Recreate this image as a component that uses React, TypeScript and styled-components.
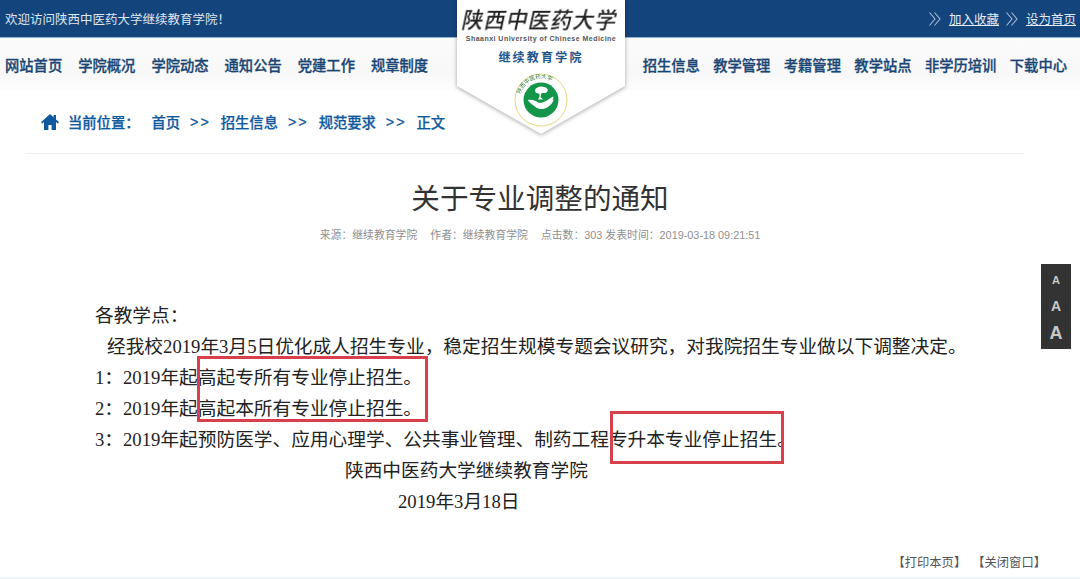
import React from 'react';
import styled, { createGlobalStyle } from 'styled-components';

const CJK = `"Noto Sans CJK SC", "Liberation Sans", sans-serif`;
const SERIF = `"Liberation Serif", "Noto Sans CJK SC", serif`;

const leftNav = ['网站首页', '学院概况', '学院动态', '通知公告', '党建工作', '规章制度'];
const rightNav = ['招生信息', '教学管理', '考籍管理', '教学站点', '非学历培训', '下载中心'];
const crumbs = ['首页', '招生信息', '规范要求', '正文'];

const DoubleChevron: React.FC = () => (
    <svg width="12" height="14" viewBox="0 0 12 14" fill="none" stroke="#a9bdd4" strokeWidth="1.1">
        <path d="M0.500 0.500 6 7 0.500 13.500" />
        <path d="M5.500 0.500 11 7 5.500 13.500" />
    </svg>
);

const App: React.FC = () => {
    return (
        <Page>
            <GlobalStyle />
            <TopBar>
                <Welcome>欢迎访问陕西中医药大学继续教育学院！</Welcome>
                <TopLinks>
                    <DoubleChevron />
                    <TopLink>加入收藏</TopLink>
                    <DoubleChevron />
                    <TopLink>设为首页</TopLink>
                </TopLinks>
            </TopBar>
            <Nav>
                <NavGroup $gap={16}>
                    {leftNav.map((item) => <NavItem key={item}>{item}</NavItem>)}
                </NavGroup>
                <NavGroup $gap={13.4}>
                    {rightNav.map((item) => <NavItem key={item}>{item}</NavItem>)}
                </NavGroup>
            </Nav>
            <PennantShadow>
                <Pennant>
                    <LogoTitle>陕西中医药大学</LogoTitle>
                    <LogoEnglish>Shaanxi University of Chinese Medicine</LogoEnglish>
                    <LogoSchool>继续教育学院</LogoSchool>
                    <svg width="54" height="54" viewBox="0 0 54 54">
                        <circle cx="27" cy="27" r="26" fill="#fff" stroke="#e9d27c" strokeWidth="1" />
                        <circle cx="27" cy="27" r="17.500" fill="#14964a" />
                        <path id="logo-ring" d="M5.500 27a21.500 21.500 0 0 1 43 0" fill="none" />
                        <text fontSize="5.500" fill="#2c7a45" fontFamily={CJK}>
                            <textPath href="#logo-ring" startOffset="6">陕西中医药大学</textPath>
                        </text>
                        <path d="M14 27c4-.5 7 .5 10 2.500 3.500 1 5.500-.5 8-1.500l7-4.500c1 1 .5 2-.5 3l1 .5c-1 4-6 8.500-11 9-2 .2-5-.2-7-2-2.500-2-5-3.500-7.500-6.500z" fill="#fff" />
                        <path d="M21 17c1-3 6-4.500 9-3 3 .5 5 3 3 5-2 1.500-4 1-5.500 1l-1 4 2.500 2.500h-5l1.500-3v-3c-2 .5-5-1-4.500-3.500z" fill="#fff" />
                    </svg>
                </Pennant>
            </PennantShadow>
            <Breadcrumb>
                <HomeIcon viewBox="0 0 18 16">
                    <path d="M9 0 0 8.200l1.200 1.300L3 7.900V16h4.400v-5h3.200v5H15V7.900l1.800 1.600L18 8.200 15 5.500V1h-2.400v2.300z" fill="#0f5a9f" />
                </HomeIcon>
                <CrumbLabel>当前位置：</CrumbLabel>
                {crumbs.map((crumb, i) => (
                    <React.Fragment key={crumb}>
                        <Crumb>{crumb}</Crumb>
                        {i < crumbs.length - 1 && <CrumbSep>&gt;&gt;</CrumbSep>}
                    </React.Fragment>
                ))}
            </Breadcrumb>
            <Article>
                <Title>关于专业调整的通知</Title>
                <Meta>
                    <span>来源：继续教育学院</span>
                    <span>作者：继续教育学院</span>
                    <span>点击数：303 发表时间：2019-03-18 09:21:51</span>
                </Meta>
                <Body>
                    <Line>各教学点：</Line>
                    <Line $indent={12}>经我校2019年3月5日优化成人招生专业，稳定招生规模专题会议研究，对我院招生专业做以下调整决定。</Line>
                    <Line>1：2019年起高起专所有专业停止招生。</Line>
                    <Line>2：2019年起高起本所有专业停止招生。</Line>
                    <Line>3：2019年起预防医学、应用心理学、公共事业管理、制药工程专升本专业停止招生。</Line>
                    <Line $indent={250}>陕西中医药大学继续教育学院</Line>
                    <Line $indent={303}>2019年3月18日</Line>
                    <MarkWide />
                    <MarkNarrow />
                </Body>
            </Article>
            <Actions>
                <span>【打印本页】</span>
                <span>【关闭窗口】</span>
            </Actions>
            <SizePanel>
                <SizeLetter $size={11}>A</SizeLetter>
                <SizeLetter $size={14}>A</SizeLetter>
                <SizeLetter $size={18}>A</SizeLetter>
            </SizePanel>
        </Page>
    );
};

const GlobalStyle = createGlobalStyle`
  html, body {
    margin: 0;
    padding: 0;
    background: #fff;
  }
`;

const Page = styled.div`
  position: relative;
  width: 1080px;
  height: 579px;
  overflow: hidden;
  background: #fff;
  font-family: ${CJK};
  border-bottom: 2px solid #eef4f9;
  box-sizing: border-box;
`;

const TopBar = styled.div`
  height: 37px;
  background: #14447c;
  border-bottom: 1px solid #8db4d6;
  display: flex;
  justify-content: space-between;
  align-items: center;
  padding: 0 4px 0 5px;
  color: #dfe7f0;
  font-size: 12.500px;
`;

const Welcome = styled.div`
  white-space: nowrap;
`;

const TopLinks = styled.div`
  display: flex;
  align-items: center;
  gap: 7.500px;
`;

const TopLink = styled.a`
  color: #e4ebf3;
  text-decoration: underline;
  font-size: 12.500px;
`;

const Nav = styled.div`
  height: 52px;
  background: linear-gradient(#fbfbfc, #f8f8f9 70%, #fdfdfd);
  display: flex;
  justify-content: space-between;
  align-items: center;
  padding: 0 13px 0 5px;
`;

const NavGroup = styled.div<{ $gap: number }>`
  display: flex;
  gap: ${(p) => p.$gap}px;
`;

const NavItem = styled.a`
  color: #1a4674;
  font-size: 14.300px;
  font-weight: 500;
  -webkit-text-stroke: 0.3px #1a4674;
`;

const PennantShadow = styled.div`
  position: absolute;
  top: 0;
  left: 457px;
  filter: drop-shadow(0 1px 2px rgba(0, 0, 0, 0.35));
`;

const Pennant = styled.div`
  width: 168px;
  height: 134px;
  background: #fff;
  clip-path: polygon(0 0, 100% 0, 100% 64.200%, 50% 100%, 0 64.200%);
  display: flex;
  flex-direction: column;
  align-items: center;
`;

const LogoTitle = styled.div`
  margin-top: 5px;
  height: 27px;
  font-size: 21px;
  line-height: 27px;
  letter-spacing: 1.200px;
  font-weight: 500;
  color: #222;
  transform: skewX(-12deg);
  white-space: nowrap;
`;

const LogoEnglish = styled.div`
  margin-top: 2px;
  font-family: "Liberation Sans", sans-serif;
  font-size: 7px;
  font-weight: 700;
  line-height: 9px;
  letter-spacing: 0.48px;
  color: #555;
  white-space: nowrap;
`;

const LogoSchool = styled.div`
  margin-top: 6px;
  font-size: 12px;
  line-height: 16px;
  font-weight: 700;
  letter-spacing: 2.200px;
  color: #1d5489;
  margin-bottom: 8px;
`;

const Breadcrumb = styled.div`
  height: 64px;
  margin: 0 55px 0 25px;
  padding-left: 16px;
  border-bottom: 1px solid #f0f0f0;
  display: flex;
  align-items: center;
  color: #0f5a9f;
  font-size: 14.300px;
  font-weight: 500;
  -webkit-text-stroke: 0.25px #0f5a9f;
  box-sizing: border-box;
`;

const HomeIcon = styled.svg`
  width: 18px;
  height: 16px;
  margin-right: 9px;
`;

const CrumbLabel = styled.span`
  margin-right: 12px;
`;

const Crumb = styled.a`
  color: #0f5a9f;
`;

const CrumbSep = styled.span`
  margin: 0 10px;
  letter-spacing: 2px;
  font-family: "Liberation Sans", sans-serif;
`;

const Article = styled.div`
  display: flex;
  flex-direction: column;
  align-items: center;
`;

const Title = styled.h1`
  margin: 23px 0 0;
  font-size: 28.600px;
  line-height: 40px;
  font-weight: 400;
  color: #333;
`;

const Meta = styled.div`
  margin-top: 11px;
  display: flex;
  gap: 13px;
  font-family: "Liberation Sans", "Noto Sans CJK SC", sans-serif;
  font-size: 10.850px;
  line-height: 14px;
  color: #8f8f8f;
`;

const Body = styled.div`
  position: relative;
  align-self: stretch;
  margin-top: 58px;
  padding-left: 95px;
  font-family: ${SERIF};
  font-size: 18.700px;
  color: #222;
`;

const Line = styled.div<{ $indent?: number }>`
  height: 31px;
  line-height: 31px;
  padding-left: ${(p) => p.$indent ?? 0}px;
  white-space: nowrap;
`;

const Mark = styled.div`
  position: absolute;
  box-sizing: border-box;
  border: 3px solid #d8404c;
`;

const MarkWide = styled(Mark)`
  left: 197px;
  top: 56px;
  width: 231px;
  height: 66px;
`;

const MarkNarrow = styled(Mark)`
  left: 610px;
  top: 111px;
  width: 174px;
  height: 53px;
`;

const Actions = styled.div`
  position: absolute;
  right: 34px;
  top: 554px;
  display: flex;
  gap: 6px;
  font-size: 12.300px;
  line-height: 16px;
  color: #555;
`;

const SizePanel = styled.div`
  position: absolute;
  top: 264px;
  left: 1041px;
  width: 30px;
  height: 85px;
  background: #333;
  display: flex;
  flex-direction: column;
  align-items: center;
  justify-content: space-around;
  padding: 3px 0;
  box-sizing: border-box;
`;

const SizeLetter = styled.span<{ $size: number }>`
  font-family: "Liberation Sans", sans-serif;
  font-weight: 700;
  font-size: ${(p) => p.$size}px;
  line-height: 20px;
  color: #c9c9c9;
`;

export default App;
